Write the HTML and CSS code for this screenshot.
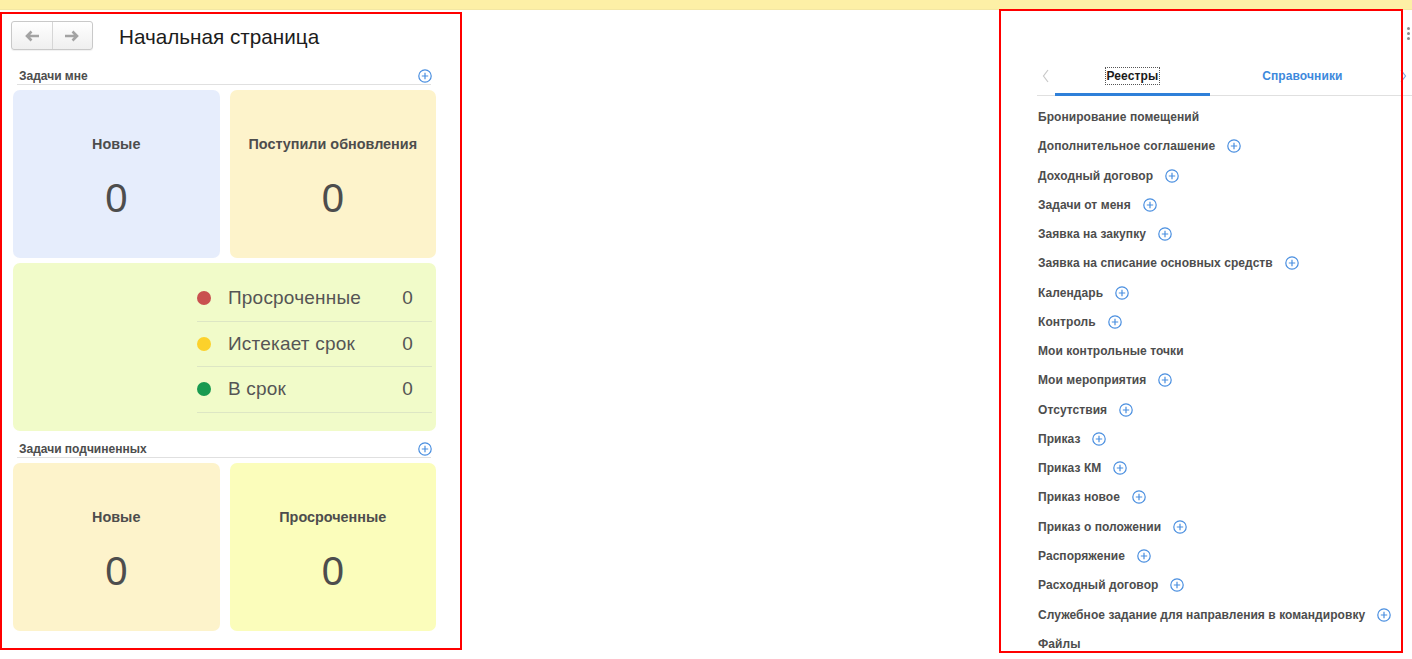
FILE: index.html
```html
<!DOCTYPE html>
<html lang="ru">
<head>
<meta charset="utf-8">
<title>Начальная страница</title>
<link rel="stylesheet" href="styles.css">
</head>
<body>
<div class="topbar"></div>
<div class="main">
  <div class="left">
    <div class="head">
      <div class="nav">
        <span class="nav-btn">
          <svg width="16" height="12" viewBox="0 0 16 12"><path d="M15 6H3M7.5 1.5L3 6l4.5 4.5" fill="none" stroke="#a3a3a3" stroke-width="2.6"/></svg>
        </span>
        <span class="nav-btn">
          <svg width="16" height="12" viewBox="0 0 16 12"><path d="M1 6h12M8.5 1.5L13 6l-4.5 4.5" fill="none" stroke="#a3a3a3" stroke-width="2.6"/></svg>
        </span>
      </div>
      <h1 class="title">Начальная страница</h1>
    </div>

    <div class="sec-head first">
      <span>Задачи мне</span>
      <svg class="plus" width="14" height="14" viewBox="0 0 14 14"><circle cx="7" cy="7" r="6.2" fill="none" stroke="#4a8fe0" stroke-width="1.2"/><path d="M7 3.8v6.4M3.8 7h6.4" stroke="#4a8fe0" stroke-width="1.2"/></svg>
    </div>
    <div class="tiles">
      <div class="tile blue"><div class="tile-title">Новые</div><div class="tile-num">0</div></div>
      <div class="tile cream"><div class="tile-title">Поступили обновления</div><div class="tile-num">0</div></div>
    </div>
    <div class="status-panel">
      <div class="status-list">
        <div class="status-row"><span class="dot red"></span><span class="status-label">Просроченные</span><span class="status-val">0</span></div>
        <div class="status-row"><span class="dot yellow"></span><span class="status-label">Истекает срок</span><span class="status-val">0</span></div>
        <div class="status-row"><span class="dot green"></span><span class="status-label">В срок</span><span class="status-val">0</span></div>
      </div>
    </div>

    <div class="sec-head second">
      <span>Задачи подчиненных</span>
      <svg class="plus" width="14" height="14" viewBox="0 0 14 14"><circle cx="7" cy="7" r="6.2" fill="none" stroke="#4a8fe0" stroke-width="1.2"/><path d="M7 3.8v6.4M3.8 7h6.4" stroke="#4a8fe0" stroke-width="1.2"/></svg>
    </div>
    <div class="tiles">
      <div class="tile cream"><div class="tile-title">Новые</div><div class="tile-num">0</div></div>
      <div class="tile lime"><div class="tile-title">Просроченные</div><div class="tile-num">0</div></div>
    </div>
  </div>

  <div class="right">
    <div class="right-top">
      <span class="more"><i></i><i></i><i></i></span>
    </div>
    <div class="tabs">
      <span class="tab-arrow">
        <svg width="7" height="14" viewBox="0 0 7 14"><path d="M6 1L1.5 7 6 13" fill="none" stroke="#c9c9c9" stroke-width="1.2"/></svg>
      </span>
      <span class="tab active"><span class="focus">Реестры</span></span>
      <span class="tab">Справочники</span>
      <span class="tab-arrow">
        <svg width="7" height="14" viewBox="0 0 7 14"><path d="M1 1l4.5 6L1 13" fill="none" stroke="#7ea8e0" stroke-width="1.2"/></svg>
      </span>
    </div>
    <ul class="reg-list">
      <li>Бронирование помещений</li>
      <li>Дополнительное соглашение <svg class="plus" width="14" height="14" viewBox="0 0 14 14"><circle cx="7" cy="7" r="6.2" fill="none" stroke="#4a8fe0" stroke-width="1.2"/><path d="M7 3.8v6.4M3.8 7h6.4" stroke="#4a8fe0" stroke-width="1.2"/></svg></li>
      <li>Доходный договор <svg class="plus" width="14" height="14" viewBox="0 0 14 14"><circle cx="7" cy="7" r="6.2" fill="none" stroke="#4a8fe0" stroke-width="1.2"/><path d="M7 3.8v6.4M3.8 7h6.4" stroke="#4a8fe0" stroke-width="1.2"/></svg></li>
      <li>Задачи от меня <svg class="plus" width="14" height="14" viewBox="0 0 14 14"><circle cx="7" cy="7" r="6.2" fill="none" stroke="#4a8fe0" stroke-width="1.2"/><path d="M7 3.8v6.4M3.8 7h6.4" stroke="#4a8fe0" stroke-width="1.2"/></svg></li>
      <li>Заявка на закупку <svg class="plus" width="14" height="14" viewBox="0 0 14 14"><circle cx="7" cy="7" r="6.2" fill="none" stroke="#4a8fe0" stroke-width="1.2"/><path d="M7 3.8v6.4M3.8 7h6.4" stroke="#4a8fe0" stroke-width="1.2"/></svg></li>
      <li>Заявка на списание основных средств <svg class="plus" width="14" height="14" viewBox="0 0 14 14"><circle cx="7" cy="7" r="6.2" fill="none" stroke="#4a8fe0" stroke-width="1.2"/><path d="M7 3.8v6.4M3.8 7h6.4" stroke="#4a8fe0" stroke-width="1.2"/></svg></li>
      <li>Календарь <svg class="plus" width="14" height="14" viewBox="0 0 14 14"><circle cx="7" cy="7" r="6.2" fill="none" stroke="#4a8fe0" stroke-width="1.2"/><path d="M7 3.8v6.4M3.8 7h6.4" stroke="#4a8fe0" stroke-width="1.2"/></svg></li>
      <li>Контроль <svg class="plus" width="14" height="14" viewBox="0 0 14 14"><circle cx="7" cy="7" r="6.2" fill="none" stroke="#4a8fe0" stroke-width="1.2"/><path d="M7 3.8v6.4M3.8 7h6.4" stroke="#4a8fe0" stroke-width="1.2"/></svg></li>
      <li>Мои контрольные точки</li>
      <li>Мои мероприятия <svg class="plus" width="14" height="14" viewBox="0 0 14 14"><circle cx="7" cy="7" r="6.2" fill="none" stroke="#4a8fe0" stroke-width="1.2"/><path d="M7 3.8v6.4M3.8 7h6.4" stroke="#4a8fe0" stroke-width="1.2"/></svg></li>
      <li>Отсутствия <svg class="plus" width="14" height="14" viewBox="0 0 14 14"><circle cx="7" cy="7" r="6.2" fill="none" stroke="#4a8fe0" stroke-width="1.2"/><path d="M7 3.8v6.4M3.8 7h6.4" stroke="#4a8fe0" stroke-width="1.2"/></svg></li>
      <li>Приказ <svg class="plus" width="14" height="14" viewBox="0 0 14 14"><circle cx="7" cy="7" r="6.2" fill="none" stroke="#4a8fe0" stroke-width="1.2"/><path d="M7 3.8v6.4M3.8 7h6.4" stroke="#4a8fe0" stroke-width="1.2"/></svg></li>
      <li>Приказ КМ <svg class="plus" width="14" height="14" viewBox="0 0 14 14"><circle cx="7" cy="7" r="6.2" fill="none" stroke="#4a8fe0" stroke-width="1.2"/><path d="M7 3.8v6.4M3.8 7h6.4" stroke="#4a8fe0" stroke-width="1.2"/></svg></li>
      <li>Приказ новое <svg class="plus" width="14" height="14" viewBox="0 0 14 14"><circle cx="7" cy="7" r="6.2" fill="none" stroke="#4a8fe0" stroke-width="1.2"/><path d="M7 3.8v6.4M3.8 7h6.4" stroke="#4a8fe0" stroke-width="1.2"/></svg></li>
      <li>Приказ о положении <svg class="plus" width="14" height="14" viewBox="0 0 14 14"><circle cx="7" cy="7" r="6.2" fill="none" stroke="#4a8fe0" stroke-width="1.2"/><path d="M7 3.8v6.4M3.8 7h6.4" stroke="#4a8fe0" stroke-width="1.2"/></svg></li>
      <li>Распоряжение <svg class="plus" width="14" height="14" viewBox="0 0 14 14"><circle cx="7" cy="7" r="6.2" fill="none" stroke="#4a8fe0" stroke-width="1.2"/><path d="M7 3.8v6.4M3.8 7h6.4" stroke="#4a8fe0" stroke-width="1.2"/></svg></li>
      <li>Расходный договор <svg class="plus" width="14" height="14" viewBox="0 0 14 14"><circle cx="7" cy="7" r="6.2" fill="none" stroke="#4a8fe0" stroke-width="1.2"/><path d="M7 3.8v6.4M3.8 7h6.4" stroke="#4a8fe0" stroke-width="1.2"/></svg></li>
      <li>Служебное задание для направления в командировку <svg class="plus" width="14" height="14" viewBox="0 0 14 14"><circle cx="7" cy="7" r="6.2" fill="none" stroke="#4a8fe0" stroke-width="1.2"/><path d="M7 3.8v6.4M3.8 7h6.4" stroke="#4a8fe0" stroke-width="1.2"/></svg></li>
      <li>Файлы</li>
    </ul>
  </div>
</div>
<div class="frame frame-left"></div>
<div class="frame frame-right"></div>
</body>
</html>
```

FILE: styles.css
```css
* { box-sizing: border-box; }
html, body { margin: 0; padding: 0; }
body {
  width: 1412px;
  height: 659px;
  overflow: hidden;
  background: #fff;
  font-family: "Liberation Sans", Arial, sans-serif;
  color: #4d4d4d;
  position: relative;
}
.topbar {
  height: 10px;
  background: #fdf0a6;
  border-bottom: 1px solid #f3e7a4;
}
.main {
  display: flex;
  justify-content: space-between;
}
.left {
  margin-left: 13px;
  width: 423px;
}
.head {
  display: flex;
  align-items: center;
  margin-top: 11px;
  margin-left: -2px;
}
.nav {
  display: flex;
  height: 29px;
  width: 82px;
  border: 1px solid #c9c9c9;
  border-radius: 3px;
  background: linear-gradient(#ffffff, #efefef);
  box-shadow: 0 1px 1px rgba(0,0,0,0.06);
}
.nav-btn {
  flex: 1;
  display: flex;
  align-items: center;
  justify-content: center;
}
.nav-btn + .nav-btn { border-left: 1px solid #d6d6d6; }
.title {
  margin: 0 0 0 26px;
  font-size: 20.7px;
  font-weight: normal;
  color: #1c1c1c;
  line-height: 24px;
  position: relative;
  top: 1px;
}
.sec-head {
  display: flex;
  align-items: center;
  justify-content: space-between;
  margin: 0 5px 0 4px;
  height: 17px;
  border-bottom: 1px solid #e0e0e0;
  font-size: 12px;
  font-weight: bold;
  color: #4d4d4d;
  padding-left: 2px;
}
.sec-head .plus { margin-right: -1px; }
.sec-head.first { margin-top: 18px; }
.sec-head.second { margin-top: 10px; }
.tiles {
  display: flex;
  gap: 10px;
  margin-top: 5px;
}
.tile {
  flex: 1;
  height: 168px;
  border-radius: 7px;
  text-align: center;
  padding-top: 46px;
}
.tile.blue { background: #e6edfc; }
.tile.cream { background: #fdf3cb; }
.tile.lime { background: #fbfdbb; }
.tile-title {
  font-size: 14.4px;
  font-weight: bold;
  line-height: 16px;
  color: #4d4d4d;
}
.tile-num {
  margin-top: 23px;
  font-size: 40px;
  line-height: 46px;
  color: #4d4d4d;
}
.status-panel {
  margin-top: 5px;
  height: 168px;
  border-radius: 7px;
  background: #f1fbc9;
  padding: 13px 4px 0 0;
  display: flex;
  justify-content: flex-end;
}
.status-list { width: 235px; }
.status-row {
  display: flex;
  align-items: center;
  height: 45.5px;
  border-bottom: 1px solid #dde6c4;
  font-size: 19px;
  letter-spacing: 0.2px;
  color: #555;
  padding-right: 19px;
}
.dot {
  width: 14px;
  height: 14px;
  border-radius: 50%;
  margin-right: 17px;
}
.dot.red { background: #c9504f; }
.dot.yellow { background: #fcd12b; }
.dot.green { background: #199a50; }
.status-label { flex: 1; }
.right {
  width: 375px;
}
.right-top {
  height: 46px;
  display: flex;
  justify-content: flex-end;
}
.more {
  display: flex;
  flex-direction: column;
  gap: 2px;
  margin-top: 17px;
  margin-right: 2px;
}
.more i {
  width: 3px;
  height: 3px;
  border-radius: 50%;
  background: #8a8a8a;
}
.tabs {
  display: flex;
  align-items: stretch;
  height: 40px;
  border-bottom: 1px solid #e0e0e0;
}
.tab-arrow {
  width: 18px;
  display: flex;
  align-items: center;
  justify-content: center;
  padding-top: 1px;
}
.tab {
  display: flex;
  align-items: center;
  padding: 3px 52px 0 52px;
  font-size: 12px;
  font-weight: bold;
  letter-spacing: 0.1px;
  color: #3d89dc;
  margin-bottom: -1px;
  border-bottom: 3px solid transparent;
}
.tab.active {
  color: #1a1a1a;
  border-bottom-color: #2f80d9;
}
.focus {
  outline: 1px dotted #555;
  outline-offset: 1px;
}
.reg-list {
  list-style: none;
  margin: 0;
  padding: 6.4px 0 0 1px;
}
.reg-list li {
  display: flex;
  align-items: center;
  height: 29.28px;
  font-size: 12px;
  font-weight: bold;
  letter-spacing: 0.06px;
  color: #4d4d4d;
  white-space: nowrap;
}
.reg-list .plus { margin-left: 12px; }
.frame {
  position: absolute;
  border: 2px solid #ff0000;
  pointer-events: none;
}
.frame-left { left: 0; top: 12px; width: 462px; height: 638px; }
.frame-right { left: 999px; top: 9px; width: 404px; height: 644px; }
```
